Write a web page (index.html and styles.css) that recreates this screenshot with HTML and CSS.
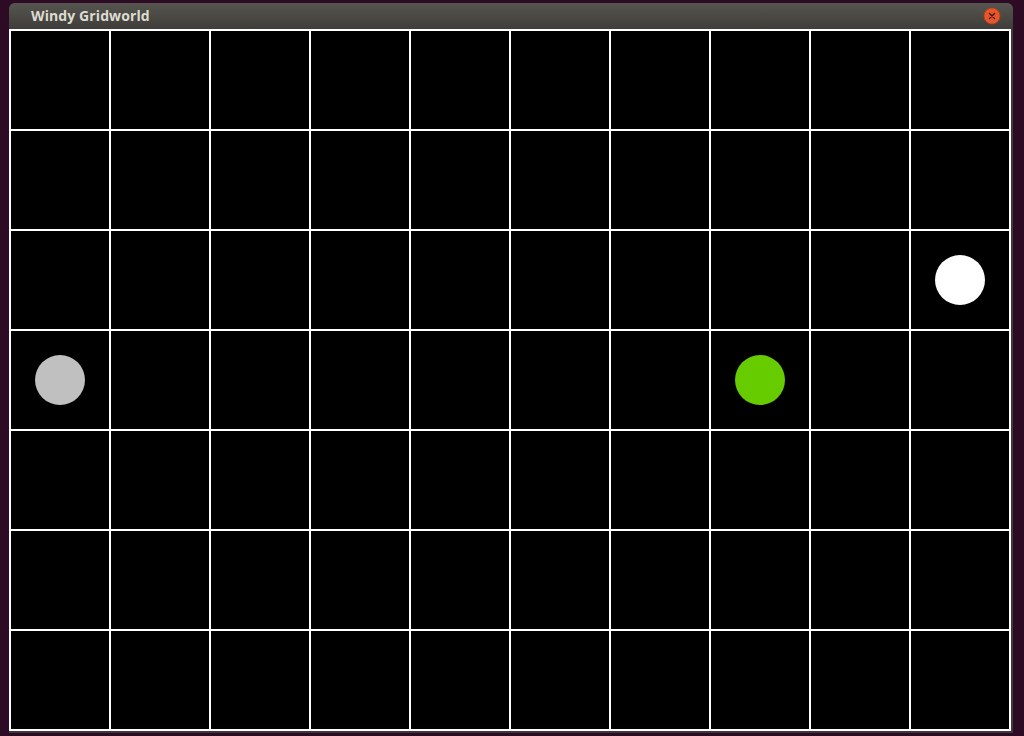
FILE: index.html
```html
<!DOCTYPE html>
<html>
<head>
<meta charset="utf-8">
<link rel="stylesheet" href="styles.css">
</head>
<body>
<div class="window">
  <div class="titlebar">
    <span class="title">Windy Gridworld</span>
    <span class="close">
      <svg width="18" height="18" viewBox="0 0 18 18">
        <circle cx="9" cy="9" r="8" fill="#e9552a"/>
        <circle cx="9" cy="9" r="8" fill="none" stroke="#b8401e" stroke-width="0.8"/>
        <path d="M6.5 6.5 L11.5 11.5 M11.5 6.5 L6.5 11.5" stroke="#3a1a10" stroke-width="1.4" stroke-linecap="round"/>
      </svg>
    </span>
  </div>
  <div class="grid">
    <div class="cell"></div><div class="cell"></div><div class="cell"></div><div class="cell"></div><div class="cell"></div><div class="cell"></div><div class="cell"></div><div class="cell"></div><div class="cell"></div><div class="cell"></div>
    <div class="cell"></div><div class="cell"></div><div class="cell"></div><div class="cell"></div><div class="cell"></div><div class="cell"></div><div class="cell"></div><div class="cell"></div><div class="cell"></div><div class="cell"></div>
    <div class="cell"></div><div class="cell"></div><div class="cell"></div><div class="cell"></div><div class="cell"></div><div class="cell"></div><div class="cell"></div><div class="cell"></div><div class="cell"></div><div class="cell"><span class="dot goal"></span></div>
    <div class="cell"><span class="dot start"></span></div><div class="cell"></div><div class="cell"></div><div class="cell"></div><div class="cell"></div><div class="cell"></div><div class="cell"></div><div class="cell"><span class="dot agent"></span></div><div class="cell"></div><div class="cell"></div>
    <div class="cell"></div><div class="cell"></div><div class="cell"></div><div class="cell"></div><div class="cell"></div><div class="cell"></div><div class="cell"></div><div class="cell"></div><div class="cell"></div><div class="cell"></div>
    <div class="cell"></div><div class="cell"></div><div class="cell"></div><div class="cell"></div><div class="cell"></div><div class="cell"></div><div class="cell"></div><div class="cell"></div><div class="cell"></div><div class="cell"></div>
    <div class="cell"></div><div class="cell"></div><div class="cell"></div><div class="cell"></div><div class="cell"></div><div class="cell"></div><div class="cell"></div><div class="cell"></div><div class="cell"></div><div class="cell"></div>
  </div>
</div>
</body>
</html>
```

FILE: styles.css
```css
html, body {
  margin: 0;
  padding: 0;
}
body {
  width: 1024px;
  height: 736px;
  background: #2e0b24;
  overflow: hidden;
  padding: 3px 0 0 9px;
  box-sizing: border-box;
}
.window {
  width: 1004px;
  background: #3c3b37;
  border-radius: 6px 6px 0 0;
  padding-bottom: 2px;
  overflow: hidden;
}
.titlebar {
  height: 26px;
  background: linear-gradient(#56554f, #3e3d39);
  display: flex;
  align-items: center;
  justify-content: space-between;
  padding: 0 12px 0 22px;
  box-sizing: border-box;
}
.title {
  font-family: "Open Sans", "DejaVu Sans", sans-serif;
  font-weight: 700;
  font-size: 14px;
  color: #dfdbd2;
  letter-spacing: 0.1px;
  margin-top: -1px;
}
.close {
  display: flex;
  margin-top: -1px;
}
.grid {
  width: 1002px;
  display: grid;
  grid-template-columns: repeat(10, 98px);
  grid-template-rows: repeat(7, 98px);
  gap: 2px;
  padding: 2px;
  box-sizing: border-box;
  background: #ffffff;
}
.cell {
  background: #000000;
  display: flex;
  align-items: center;
  justify-content: center;
}
.dot {
  width: 50px;
  height: 50px;
  border-radius: 50%;
}
.start { background: #c0c0c0; }
.agent { background: #66cc00; }
.goal { background: #ffffff; }
```
